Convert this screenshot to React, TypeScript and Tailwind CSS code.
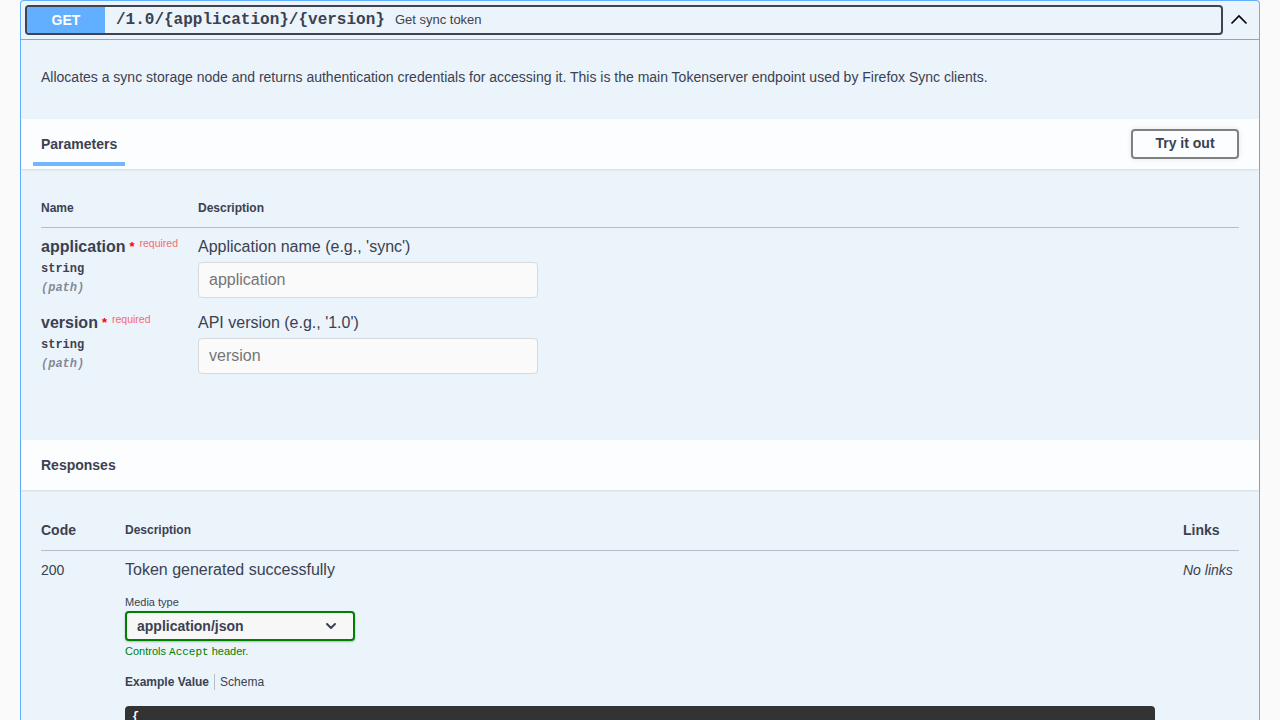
import React from 'react';

const sans = { fontFamily: '"Liberation Sans", Arial, sans-serif' };
const mono = { fontFamily: '"Liberation Mono", "Courier New", monospace' };

function ChevronUp() {
  return (
    <svg width="18" height="12" viewBox="0 0 18 12" fill="none">
      <path d="M1.5 10.5 L9 3 L16.5 10.5" stroke="#000" strokeWidth="1.6" />
    </svg>
  );
}

function ChevronDown() {
  return (
    <svg width="12" height="8" viewBox="0 0 12 8" fill="none">
      <path d="M2 2 L6 6 L10 2" stroke="#3b4151" strokeWidth="2" strokeLinecap="round" strokeLinejoin="round" />
    </svg>
  );
}

type Param = { name: string; type: string; where: string; description: string };

const params: Param[] = [
  { name: 'application', type: 'string', where: '(path)', description: "Application name (e.g., 'sync')" },
  { name: 'version', type: 'string', where: '(path)', description: "API version (e.g., '1.0')" },
];

function ParamRow({ p }: { p: Param }) {
  return (
    <div className="flex pt-[8px] pb-[7px]">
      <div className="w-[157px] shrink-0">
        <div className="flex items-start leading-5">
          <span className="text-[16px] font-bold text-[#3b4151]">{p.name}</span>
          <span className="ml-[4px] text-[13px] font-bold text-[#ff0000] leading-5">*</span>
          <span className="ml-[5px] -mt-[2px] text-[10.5px] text-[#ff0000]/60 leading-4">required</span>
        </div>
        <div className="mt-[5px] text-[12px] font-semibold leading-[14px] text-[#3b4151]" style={mono}>
          {p.type}
        </div>
        <div className="mt-[5px] text-[12px] italic font-semibold leading-[14px] text-[#3b4151]/60" style={mono}>
          {p.where}
        </div>
      </div>
      <div className="flex-1">
        <div className="text-[16px] leading-5 text-[#3b4151]">{p.description}</div>
        <input
          className="mt-[5px] h-[36px] w-[340px] rounded-[4px] border border-[#d9d9d9] bg-[#fafafa] px-[10px] text-[16px] text-[#3b4151] outline-none placeholder:text-[#757575]"
          placeholder={p.name}
          style={sans}
          readOnly
        />
      </div>
    </div>
  );
}

export default function App() {
  return (
    <div className="h-[720px] w-full overflow-hidden bg-[#fafafa] px-[20px] text-[#3b4151]" style={sans}>
      <div className="rounded-t-[4px] border border-b-0 border-[#61affe] bg-[#ebf3fb] pb-[40px]">
        {/* summary bar */}
        <div className="flex h-[39px] items-center border-b border-[#61affe] pl-[4px]">
          <div className="flex h-[30px] flex-1 items-center overflow-hidden rounded-[4px] border-2 border-[#41444e]">
            <div className="flex h-full w-[78px] items-center justify-center bg-[#61affe] text-[14px] font-bold text-white">
              GET
            </div>
            <span className="ml-[11px] text-[16px] font-bold text-[#3b4151]" style={mono}>
              /1.0/&#8203;{'{application}'}/&#8203;{'{version}'}
            </span>
            <span className="ml-[10px] text-[13px] text-[#3b4151]">Get sync token</span>
          </div>
          <div className="flex w-[36px] items-center justify-start pl-[7px] pb-[2px]">
            <ChevronUp />
          </div>
        </div>

        {/* description */}
        <div className="px-[20px] pt-[27px] pb-[32px] text-[14px] leading-5">
          Allocates a sync storage node and returns authentication credentials for accessing it. This is the main
          Tokenserver endpoint used by Firefox Sync clients.
        </div>

        {/* parameters header */}
        <div className="flex h-[50px] items-center justify-between bg-white/80 pl-[12px] pr-[20px] shadow-[0_1px_2px_rgba(0,0,0,0.1)]">
          <div className="flex h-full flex-col justify-end">
            <div className="px-[8px] pb-[8px] text-[14px] font-bold leading-5">Parameters</div>
            <div className="mb-[3px] h-[4px] w-[92px] bg-[#61affe]/90" />
          </div>
          <button className="-mt-[1px] h-[30px] w-[108px] rounded-[4px] border-2 border-[#808080] text-[14px] font-bold text-[#3b4151] shadow-[0_0_5px_rgba(0,0,0,0.1)]">
            Try it out
          </button>
        </div>

        {/* parameters table */}
        <div className="px-[20px] pt-[31px] pb-[60px]">
          <div className="flex border-b border-[#3b4151]/30 pb-[11px] text-[12px] font-bold leading-4">
            <div className="w-[157px]">Name</div>
            <div>Description</div>
          </div>
          <div className="pt-[1px]">
            {params.map((p) => (
              <ParamRow key={p.name} p={p} />
            ))}
          </div>
        </div>

        {/* responses header */}
        <div className="-mt-[1px] flex h-[50px] items-center bg-white/80 px-[20px] text-[14px] font-bold shadow-[0_1px_2px_rgba(0,0,0,0.1)]">
          Responses
        </div>

        {/* responses table */}
        <div className="px-[20px] pt-[30px]">
          <div className="flex items-center border-b border-[#3b4151]/30 pb-[10px] leading-5">
            <div className="w-[84px] text-[14px] font-bold">Code</div>
            <div className="flex-1 text-[12px] font-bold">Description</div>
            <div className="w-[56px] text-[14px] font-bold">Links</div>
          </div>
          <div className="flex pt-[9px]">
            <div className="w-[84px] text-[14px] leading-5">200</div>
            <div className="flex-1">
              <div className="text-[16px] leading-5">Token generated successfully</div>
              <div className="mt-[15px] text-[11px] leading-[14px]">Media type</div>
              <div className="mt-[2px] flex h-[30px] w-[230px] items-center justify-between rounded-[4px] border-2 border-[#008000] bg-[#f7f7f7] pl-[10px] pr-[16px] shadow-[0_1px_2px_rgba(0,0,0,0.25)]">
                <span className="text-[14px] font-bold">application/json</span>
                <ChevronDown />
              </div>
              <div className="mt-[3px] text-[11px] leading-[14px] text-[#008000]">
                Controls <span style={mono}>Accept</span> header.
              </div>
              <div className="mt-[15px] flex items-center text-[12px] leading-4">
                <span className="font-bold">Example Value</span>
                <span className="mx-[5px] h-[16px] w-px bg-[#3b4151]/30" />
                <span>Schema</span>
              </div>
              <div className="mt-[16px] mr-[28px] h-[60px] rounded-[4px] bg-[#333333] px-[7px] pt-[3px] text-[12px] font-bold leading-4 text-white" style={mono}>
                {'{'}
              </div>
            </div>
            <div className="w-[56px] text-[14px] italic leading-5">No links</div>
          </div>
        </div>
      </div>
    </div>
  );
}
